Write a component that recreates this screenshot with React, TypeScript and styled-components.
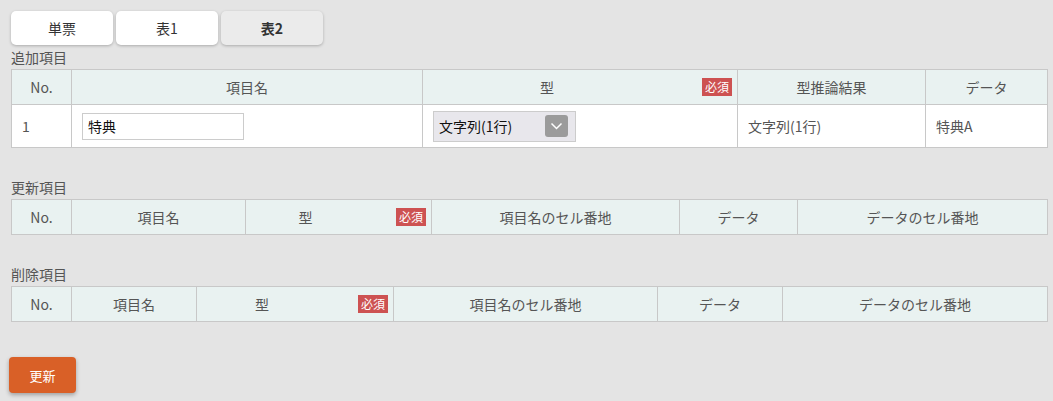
import React from "react";
import styled, { createGlobalStyle } from "styled-components";

const GlobalStyle = createGlobalStyle`
  html, body {
    margin: 0;
    padding: 0;
    background: #e4e4e4;
    font-family: "Noto Sans CJK JP", "Noto Sans", sans-serif;
    color: #555;
  }
`;

const Page = styled.div`
  padding: 11px 6px 8px 11px;
  display: flex;
  flex-direction: column;
  align-items: flex-start;
`;

const Tabs = styled.div`
  display: flex;
  gap: 3px;
`;

const Tab = styled.button<{ $active?: boolean }>`
  width: 102px;
  height: 34px;
  border: none;
  border-radius: 5px;
  background: ${(p) => (p.$active ? "#ebebeb" : "#ffffff")};
  box-shadow: 0 1px 3px rgba(0, 0, 0, 0.25);
  font-family: inherit;
  font-size: 14px;
  font-weight: ${(p) => (p.$active ? 700 : 400)};
  color: #333;
  cursor: pointer;
  padding: 0;
`;

const Section = styled.section<{ $first?: boolean }>`
  margin-top: ${(p) => (p.$first ? "3px" : "30px")};
  width: 1036px;
`;

const Label = styled.div`
  font-size: 14px;
  line-height: 18px;
  color: #555;
  margin-bottom: 3px;
`;

const Table = styled.table`
  width: 1036px;
  border-collapse: collapse;
  table-layout: fixed;
  background: #fff;
`;

const Th = styled.th<{ $badge?: boolean }>`
  position: relative;
  height: 35px;
  padding: 0 ${(p) => (p.$badge ? "66px" : "0")} 0 0;
  border: 1px solid #c8c8c8;
  background: #e9f2f1;
  font-size: 14px;
  font-weight: 400;
  color: #555;
  text-align: center;
  box-sizing: border-box;
`;

const Badge = styled.span`
  position: absolute;
  right: 5px;
  top: 50%;
  transform: translateY(-50%);
  width: 30px;
  height: 18px;
  background: #cd5252;
  color: #fff;
  font-size: 12px;
  line-height: 18px;
  text-align: center;
`;

const Td = styled.td`
  height: 43px;
  padding: 0 10px;
  border: 1px solid #c8c8c8;
  font-size: 14px;
  color: #555;
  text-align: left;
  box-sizing: border-box;
`;

const TextInput = styled.input`
  display: block;
  width: 162px;
  height: 27px;
  box-sizing: border-box;
  border: 1px solid #ccc;
  background: #fff;
  padding: 0 5px;
  font-family: inherit;
  font-size: 14px;
  color: #111;
  outline: none;
`;

const SelectBox = styled.div`
  width: 143px;
  height: 31px;
  box-sizing: border-box;
  border: 1px solid #ccc;
  background: #e8e7ec;
  display: flex;
  align-items: center;
  justify-content: space-between;
  padding: 0 7px 0 5px;
  font-size: 14px;
  color: #111;
`;

const SelectArrow = styled.span`
  width: 23px;
  height: 22px;
  border-radius: 3px;
  background: #9b9b9b;
  display: flex;
  align-items: center;
  justify-content: center;
`;

const UpdateButton = styled.button`
  margin-top: 35px;
  margin-left: -2px;
  width: 67px;
  height: 36px;
  border: none;
  border-radius: 4px;
  background: #d96027;
  color: #fff;
  font-family: inherit;
  font-size: 13px;
  box-shadow: 0 2px 4px rgba(0, 0, 0, 0.3);
  cursor: pointer;
  padding: 0;
`;

type Col = { label: string; width: number; badge?: boolean };

const HeaderRow: React.FC<{ cols: Col[] }> = ({ cols }) => (
  <>
    <colgroup>
      {cols.map((c, i) => (
        <col key={i} style={{ width: c.width }} />
      ))}
    </colgroup>
    <thead>
      <tr>
        {cols.map((c, i) => (
          <Th key={i} $badge={c.badge}>
            {c.label}
            {c.badge && <Badge>必須</Badge>}
          </Th>
        ))}
      </tr>
    </thead>
  </>
);

const addCols: Col[] = [
  { label: "No.", width: 60 },
  { label: "項目名", width: 351 },
  { label: "型", width: 315, badge: true },
  { label: "型推論結果", width: 188 },
  { label: "データ", width: 122 },
];

const updCols: Col[] = [
  { label: "No.", width: 60 },
  { label: "項目名", width: 174 },
  { label: "型", width: 186, badge: true },
  { label: "項目名のセル番地", width: 248 },
  { label: "データ", width: 118 },
  { label: "データのセル番地", width: 250 },
];

const delCols: Col[] = [
  { label: "No.", width: 60 },
  { label: "項目名", width: 125 },
  { label: "型", width: 197, badge: true },
  { label: "項目名のセル番地", width: 264 },
  { label: "データ", width: 125 },
  { label: "データのセル番地", width: 265 },
];

const Chevron = () => (
  <svg width="13" height="8" viewBox="0 0 13 8">
    <path d="M1.5 1.5 L6.5 6.5 L11.5 1.5" fill="none" stroke="#fff" strokeWidth="1.5" />
  </svg>
);

export default function App() {
  return (
    <Page>
      <GlobalStyle />
      <Tabs>
        <Tab>単票</Tab>
        <Tab>表1</Tab>
        <Tab $active>表2</Tab>
      </Tabs>

      <Section $first>
        <Label>追加項目</Label>
        <Table>
          <HeaderRow cols={addCols} />
          <tbody>
            <tr>
              <Td>1</Td>
              <Td>
                <TextInput defaultValue="特典" />
              </Td>
              <Td>
                <SelectBox>
                  <span>文字列(1行)</span>
                  <SelectArrow>
                    <Chevron />
                  </SelectArrow>
                </SelectBox>
              </Td>
              <Td>文字列(1行)</Td>
              <Td>特典A</Td>
            </tr>
          </tbody>
        </Table>
      </Section>

      <Section>
        <Label>更新項目</Label>
        <Table>
          <HeaderRow cols={updCols} />
        </Table>
      </Section>

      <Section>
        <Label>削除項目</Label>
        <Table>
          <HeaderRow cols={delCols} />
        </Table>
      </Section>

      <UpdateButton>更新</UpdateButton>
    </Page>
  );
}
